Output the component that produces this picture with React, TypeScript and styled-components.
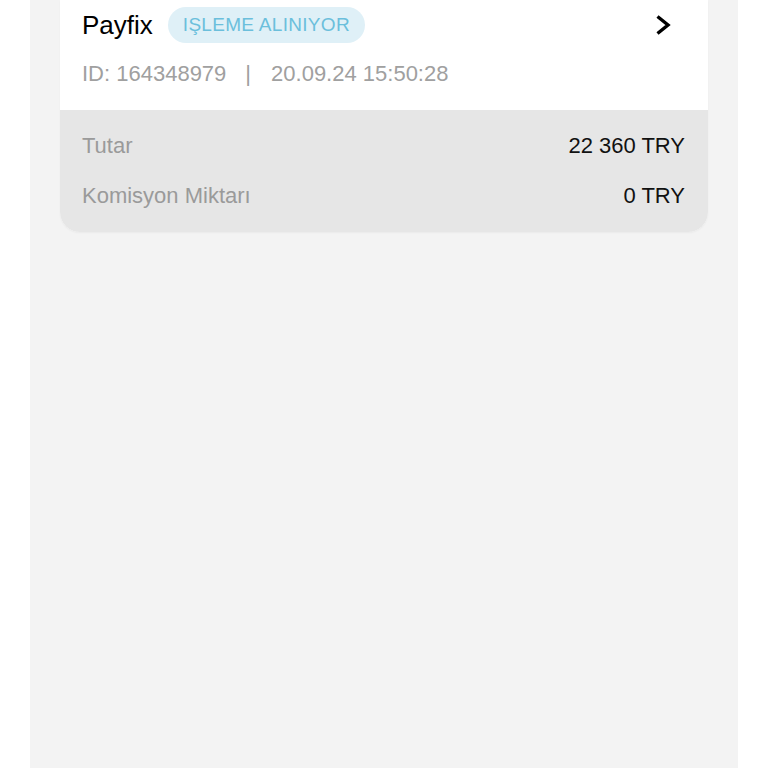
import React from "react";
import styled, { createGlobalStyle } from "styled-components";

const Global = createGlobalStyle`
  html, body { margin: 0; padding: 0; background: #ffffff; }
  body { font-family: "Liberation Sans", Arial, sans-serif; }
  * { box-sizing: border-box; }
`;

const Page = styled.div`
  display: flex;
  justify-content: center;
  min-height: 768px;
  background: #ffffff;
`;

const Column = styled.div`
  width: 708px;
  min-height: 768px;
  background: #f3f3f3;
  padding: 0 30px;
`;

const Card = styled.div`
  border-radius: 0 0 20px 20px;
  overflow: hidden;
  background: #ffffff;
  box-shadow: 0 1px 2px rgba(0, 0, 0, 0.04);
`;

const Head = styled.div`
  background: #ffffff;
  padding: 7px 37px 23px 22px;
  display: flex;
  flex-direction: column;
  gap: 18px;
`;

const TitleRow = styled.div`
  display: flex;
  align-items: center;
`;

const Title = styled.span`
  font-size: 26px;
  line-height: 36px;
  color: #000000;
  margin-right: 15px;
`;

const Badge = styled.span`
  height: 36px;
  display: inline-flex;
  align-items: center;
  padding: 0 15px;
  border-radius: 18px;
  background: #dff0f7;
  color: #6bbfdc;
  font-size: 19px;
  letter-spacing: 0.3px;
`;

const Chevron = styled.svg`
  margin-left: auto;
  display: block;
`;

const Meta = styled.div`
  font-size: 22px;
  line-height: 26px;
  color: #a0a0a0;
  display: flex;
`;

const Sep = styled.span`
  margin: 0 20px 0 19px;
`;

const Details = styled.div`
  background: #e6e6e6;
  padding: 23px 23px 23px 22px;
  display: flex;
  flex-direction: column;
  gap: 24px;
`;

const Row = styled.div`
  display: flex;
  justify-content: space-between;
  align-items: center;
  font-size: 22px;
  line-height: 26px;
`;

const Label = styled.span`
  color: #9a9a9a;
`;

const Value = styled.span`
  color: #111111;
`;

export default function App() {
  return (
    <>
      <Global />
      <Page>
        <Column>
          <Card>
            <Head>
              <TitleRow>
                <Title>Payfix</Title>
                <Badge>IŞLEME ALINIYOR</Badge>
                <Chevron width="16" height="22" viewBox="0 0 16 22">
                  <polyline
                    points="2.5,2.5 13,11 2.5,19.5"
                    fill="none"
                    stroke="#000"
                    strokeWidth="3.4"
                    strokeLinejoin="miter"
                  />
                </Chevron>
              </TitleRow>
              <Meta>
                <span>ID: 164348979</span>
                <Sep>|</Sep>
                <span>20.09.24 15:50:28</span>
              </Meta>
            </Head>
            <Details>
              <Row>
                <Label>Tutar</Label>
                <Value>22 360 TRY</Value>
              </Row>
              <Row>
                <Label>Komisyon Miktarı</Label>
                <Value>0 TRY</Value>
              </Row>
            </Details>
          </Card>
        </Column>
      </Page>
    </>
  );
}
